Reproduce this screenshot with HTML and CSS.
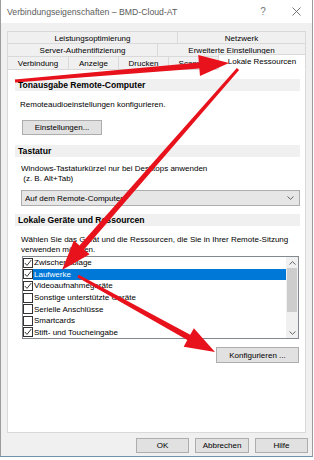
FILE: index.html
```html
<!DOCTYPE html>
<html lang="de">
<head>
<meta charset="utf-8">
<title>Verbindungseigenschaften</title>
<link rel="stylesheet" href="styles.css">
</head>
<body>
<div class="win">
  <div class="titlebar">
    <span class="title">Verbindungseigenschaften – BMD-Cloud-AT</span>
    <span class="help">?</span>
    <svg class="close" width="9" height="9" viewBox="0 0 9 9"><path d="M0.5 0.5 L8.5 8.5 M8.5 0.5 L0.5 8.5" stroke="#666" stroke-width="0.9" fill="none"/></svg>
  </div>
  <div class="content">
    <div class="tabs">
      <div class="row r1">
        <div class="tab w171">Leistungsoptimierung</div>
        <div class="tab w129">Netzwerk</div>
      </div>
      <div class="row r2">
        <div class="tab w151">Server-Authentifizierung</div>
        <div class="tab w149">Erweiterte Einstellungen</div>
      </div>
      <div class="row r3">
        <div class="tab w62">Verbindung</div>
        <div class="tab w51">Anzeige</div>
        <div class="tab w51">Drucken</div>
        <div class="tab w51">Scanner</div>
        <div class="tab w88 sel">Lokale Ressourcen</div>
      </div>
    </div>
    <div class="panel">
      <div class="band">Tonausgabe Remote-Computer</div>
      <div class="txt t1">Remoteaudioeinstellungen konfigurieren.</div>
      <div class="btn b-einst">Einstellungen...</div>

      <div class="band b2">Tastatur</div>
      <div class="txt t2">Windows-Tastaturkürzel nur bei Desktops anwenden<br>&nbsp;(z. B. Alt+Tab)</div>
      <div class="combo">
        <span class="combo-text">Auf dem Remote-Computer</span>
        <svg class="chev" width="7" height="4" viewBox="0 0 7 4"><path d="M0.5 0.5 L3.5 3.3 L6.5 0.5" stroke="#555" stroke-width="0.9" fill="none"/></svg>
      </div>

      <div class="band b3">Lokale Geräte und Ressourcen</div>
      <div class="txt t3">Wählen Sie das Gerät und die Ressourcen, die Sie in Ihrer Remote-Sitzung<br>verwenden möchten.</div>
      <div class="list">
        <div class="items">
          <div class="item"><span class="cb"><svg width="8" height="8" viewBox="0 0 8 8"><path d="M0.8 4 L3 6.4 L7.3 1" stroke="#222" stroke-width="0.9" fill="none"/></svg></span><span class="lbl">Zwischenablage</span></div>
          <div class="item"><span class="cb"><svg width="8" height="8" viewBox="0 0 8 8"><path d="M0.8 4 L3 6.4 L7.3 1" stroke="#222" stroke-width="0.9" fill="none"/></svg></span><span class="lbl on">Laufwerke</span></div>
          <div class="item"><span class="cb"><svg width="8" height="8" viewBox="0 0 8 8"><path d="M0.8 4 L3 6.4 L7.3 1" stroke="#222" stroke-width="0.9" fill="none"/></svg></span><span class="lbl">Videoaufnahmegeräte</span></div>
          <div class="item"><span class="cb"></span><span class="lbl">Sonstige unterstützte Geräte</span></div>
          <div class="item"><span class="cb"></span><span class="lbl">Serielle Anschlüsse</span></div>
          <div class="item"><span class="cb"></span><span class="lbl">Smartcards</span></div>
          <div class="item"><span class="cb"><svg width="8" height="8" viewBox="0 0 8 8"><path d="M0.8 4 L3 6.4 L7.3 1" stroke="#222" stroke-width="0.9" fill="none"/></svg></span><span class="lbl">Stift- und Toucheingabe</span></div>
        </div>
        <div class="sb">
          <div class="sb-arrow"><svg width="7" height="4" viewBox="0 0 7 4"><path d="M0.5 3.5 L3.5 0.7 L6.5 3.5" stroke="#555" stroke-width="0.9" fill="none"/></svg></div>
          <div class="sb-thumb"></div>
          <div class="sb-space"></div>
          <div class="sb-arrow"><svg width="7" height="4" viewBox="0 0 7 4"><path d="M0.5 0.5 L3.5 3.3 L6.5 0.5" stroke="#555" stroke-width="0.9" fill="none"/></svg></div>
        </div>
      </div>
      <div class="btn b-konf">Konfigurieren ...</div>
    </div>
    <div class="footer">
      <div class="btn b-ok">OK</div>
      <div class="btn b-abb">Abbrechen</div>
      <div class="btn b-hilfe">Hilfe</div>
    </div>
  </div>
</div>
<svg class="arrows" width="314" height="460" viewBox="0 0 314 460">
  <g fill="#e8121c">
    <polygon points="14.87,79.51 198.85,62.52 198.22,55.05 229,63 199.98,75.97 199.35,68.5 15.13,82.49"/>
    <polygon points="236.87,68.01 79.5,245.45 73.86,240.51 62,270 89.66,254.35 84.02,249.41 239.13,69.99"/>
    <polygon points="78.73,274.69 190.23,334.83 193.86,328.27 215,352 183.68,346.63 187.31,340.07 77.27,277.31"/>
  </g>
</svg>
</body>
</html>
```

FILE: styles.css
```css
* { box-sizing: border-box; }
html, body { margin: 0; padding: 0; }
body {
  width: 314px;
  height: 460px;
  overflow: hidden;
  position: relative;
  background: #ffffff;
  font-family: "Liberation Sans", Arial, sans-serif;
  font-size: 8px;
  color: #000;
}
.win {
  width: 313px;
  height: 457px;
  border: 1px solid #9c9c9c;
  border-top: none;
  border-bottom-color: #6f93a8;
  background: #f0f0f0;
  display: flex;
  flex-direction: column;
}
.titlebar {
  height: 23px;
  background: #fff;
  display: flex;
  align-items: center;
  padding: 0 11px 0 6px;
}
.title {
  flex: 1;
  font-size: 8.7px;
  color: #5c5c5c;
  white-space: nowrap;
}
.help {
  width: 12px;
  text-align: center;
  font-size: 10px;
  color: #777;
  margin-right: 23px;
}
.close { display: block; }
.content {
  padding: 8px 6px 0 6px;
  display: flex;
  flex-direction: column;
}
.tabs { display: flex; flex-direction: column; }
.row { display: flex; }
.r1 { height: 13px; }
.r2 { height: 14px; margin-top: -1px; }
.r3 { height: 14px; margin-top: -1px; margin-bottom: -1px; align-items: flex-end; position: relative; z-index: 1; }
.tab {
  height: 100%;
  border: 1px solid #d9d9d9;
  background: #f0f0f0;
  margin-left: -1px;
  display: flex;
  align-items: center;
  justify-content: center;
  white-space: nowrap;
  font-size: 8px;
  padding-top: 1px;
}
.tab:first-child { margin-left: 0; }
.tab.sel {
  height: 16px;
  background: #fff;
  border-bottom-color: #fff;
  padding-top: 0;
  padding-bottom: 2px;
}
.w171 { width: 171px; }
.w129 { width: 129px; }
.w151 { width: 151px; }
.w149 { width: 149px; }
.w62 { width: 62px; }
.w51 { width: 51px; }
.w88 { width: 88px; }
.panel {
  background: #fff;
  border: 1px solid #d9d9d9;
  height: 364px;
  padding: 9px 5px 0 7px;
  display: flex;
  flex-direction: column;
}
.band {
  background: #f0f0f0;
  height: 12px;
  font-weight: bold;
  font-size: 8.6px;
  display: flex;
  align-items: center;
  padding-left: 3px;
  white-space: nowrap;
}
.b2 { margin-top: 10px; }
.b3 { margin-top: 8px; }
.txt {
  margin-left: 6px;
  line-height: 10px;
  white-space: nowrap;
}
.t1 { margin-top: 9px; margin-left: 5px; }
.t2 { margin-top: 7px; }
.t3 { margin-top: 9px; }
.btn {
  background: #e1e1e1;
  border: 1px solid #adadad;
  height: 15px;
  display: flex;
  align-items: center;
  justify-content: center;
  white-space: nowrap;
}
.b-einst { margin: 10px 0 0 7px; width: 80px; }
.combo {
  margin: 6px 0 0 6px;
  height: 16px;
  background: #e6e6e6;
  border: 1px solid #adadad;
  display: flex;
  align-items: center;
  padding: 0 5px 0 3px;
}
.combo-text { flex: 1; }
.chev { display: block; }
.list {
  margin: 1px 1px 0 7px;
  height: 83px;
  border: 1px solid #828790;
  background: #fff;
  display: flex;
}
.items { flex: 1; display: flex; flex-direction: column; }
.item {
  height: 11.6px;
  display: flex;
  align-items: center;
}
.cb {
  width: 10px;
  height: 10px;
  border: 1px solid #333;
  background: #fff;
  display: flex;
  align-items: center;
  justify-content: center;
  flex: none;
}
.cb svg { display: block; }
.lbl {
  flex: 1;
  height: 11px;
  display: flex;
  align-items: center;
  padding-left: 1px;
  white-space: nowrap;
}
.lbl.on { background: #0078d7; color: #fff; }
.sb {
  width: 12px;
  background: #f0f0f0;
  display: flex;
  flex-direction: column;
}
.sb-arrow {
  height: 11px;
  display: flex;
  align-items: center;
  justify-content: center;
}
.sb-arrow svg { display: block; }
.sb-thumb { height: 44px; background: #cdcdcd; margin: 0 1px; }
.sb-space { flex: 1; }
.b-konf {
  align-self: flex-end;
  margin: 8px 1px 0 0;
  width: 83px;
  height: 16px;
}
.footer {
  display: flex;
  justify-content: flex-end;
  gap: 6px;
  margin: 5px -2px 0 0;
}
.b-ok { width: 53px; }
.b-abb { width: 54px; }
.b-hilfe { width: 53px; }
.arrows {
  position: absolute;
  left: 0;
  top: 0;
  z-index: 10;
  pointer-events: none;
}
```
